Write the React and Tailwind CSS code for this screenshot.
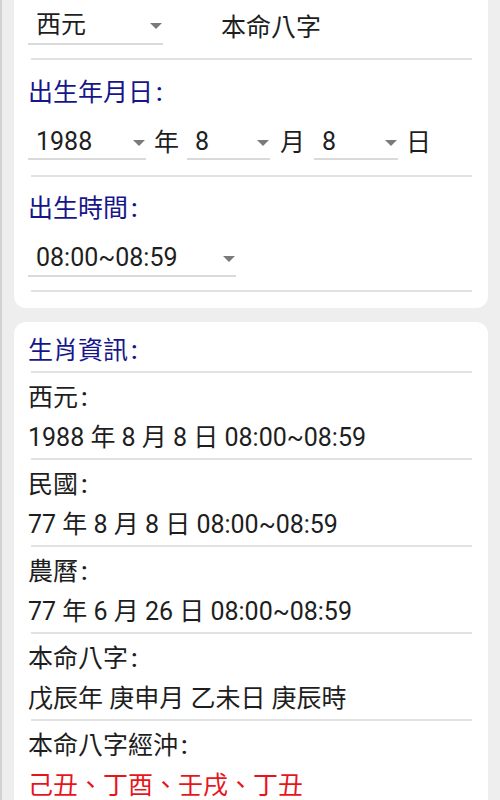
import React from "react";

const font = { fontFamily: 'Roboto, "Noto Sans CJK TC", sans-serif' };

function Arrow() {
  return (
    <span className="block w-0 h-0 border-l-[6px] border-r-[6px] border-t-[6px] border-l-transparent border-r-transparent border-t-[#7a7a7a] mt-[3px]" />
  );
}

function Select({ value, className }) {
  return (
    <div className={"flex items-center justify-between border-b-2 border-[#dadada] pl-2 pr-[1px] " + className}>
      <span className="leading-none">{value}</span>
      <Arrow />
    </div>
  );
}

function Divider({ className = "" }) {
  return <div className={"h-[2px] bg-[#e2e2e2] ml-[3px] " + className} />;
}

function Label({ text, className = "" }) {
  return (
    <span className={"leading-none " + className}>
      {text}
      <span className="ml-[3px] font-medium">:</span>
    </span>
  );
}

function Info({ label, value, red, last }) {
  return (
    <div>
      <div className="h-[44px] pt-[4px] flex items-center">
        <Label text={label} />
      </div>
      <div className={"h-[40px] flex items-center leading-none " + (red ? "text-[#e8141c]" : "")}>{value}</div>
      {!last && <div className="h-[1px]" />}
      {!last && <Divider />}
    </div>
  );
}

export default function App() {
  return (
    <div className="min-h-[800px] bg-[#eeeeee] border-l-2 border-[#d2d2d2] text-[25px] text-[#1e1e1e]" style={font}>
      <div className="mx-[12px] bg-white rounded-b-xl pl-[14px] pr-[16px] pb-[16px]">
        <div className="flex items-center h-[45px]">
          <Select value="西元" className="w-[135px] h-[45px] pt-[5px]" />
          <span className="ml-[58px] leading-none mt-[9px]">本命八字</span>
        </div>
        <Divider className="mt-[13px]" />
        <div className="h-[64px] flex items-center text-[#16168a]">
          <Label text="出生年月日" />
        </div>
        <div className="flex items-center gap-2">
          <Select value="1988" className="w-[118px] h-[36px]" />
          <span className="leading-none">年</span>
          <Select value="8" className="w-[83px] h-[36px]" />
          <span className="leading-none ml-[2px]">月</span>
          <Select value="8" className="w-[84px] h-[36px] ml-[1px]" />
          <span className="leading-none">日</span>
        </div>
        <Divider className="mt-[15px]" />
        <div className="h-[62px] flex items-center text-[#16168a]">
          <Label text="出生時間" />
        </div>
        <Select value="08:00~08:59" className="w-[208px] h-[38px]" />
        <Divider className="mt-[13px]" />
      </div>

      <div className="mx-[12px] mt-[14px] bg-white rounded-xl pl-[14px] pr-[16px] pb-[30px]">
        <div className="h-[49px] pt-[7px] flex items-center text-[#16168a]">
          <Label text="生肖資訊" />
        </div>
        <Divider />
        <Info label="西元" value="1988 年 8 月 8 日 08:00~08:59" />
        <Info label="民國" value="77 年 8 月 8 日 08:00~08:59" />
        <Info label="農曆" value="77 年 6 月 26 日 08:00~08:59" />
        <Info label="本命八字" value="戊辰年 庚申月 乙未日 庚辰時" />
        <Info label="本命八字經沖" value="己丑、丁酉、壬戌、丁丑" red last />
      </div>
    </div>
  );
}
